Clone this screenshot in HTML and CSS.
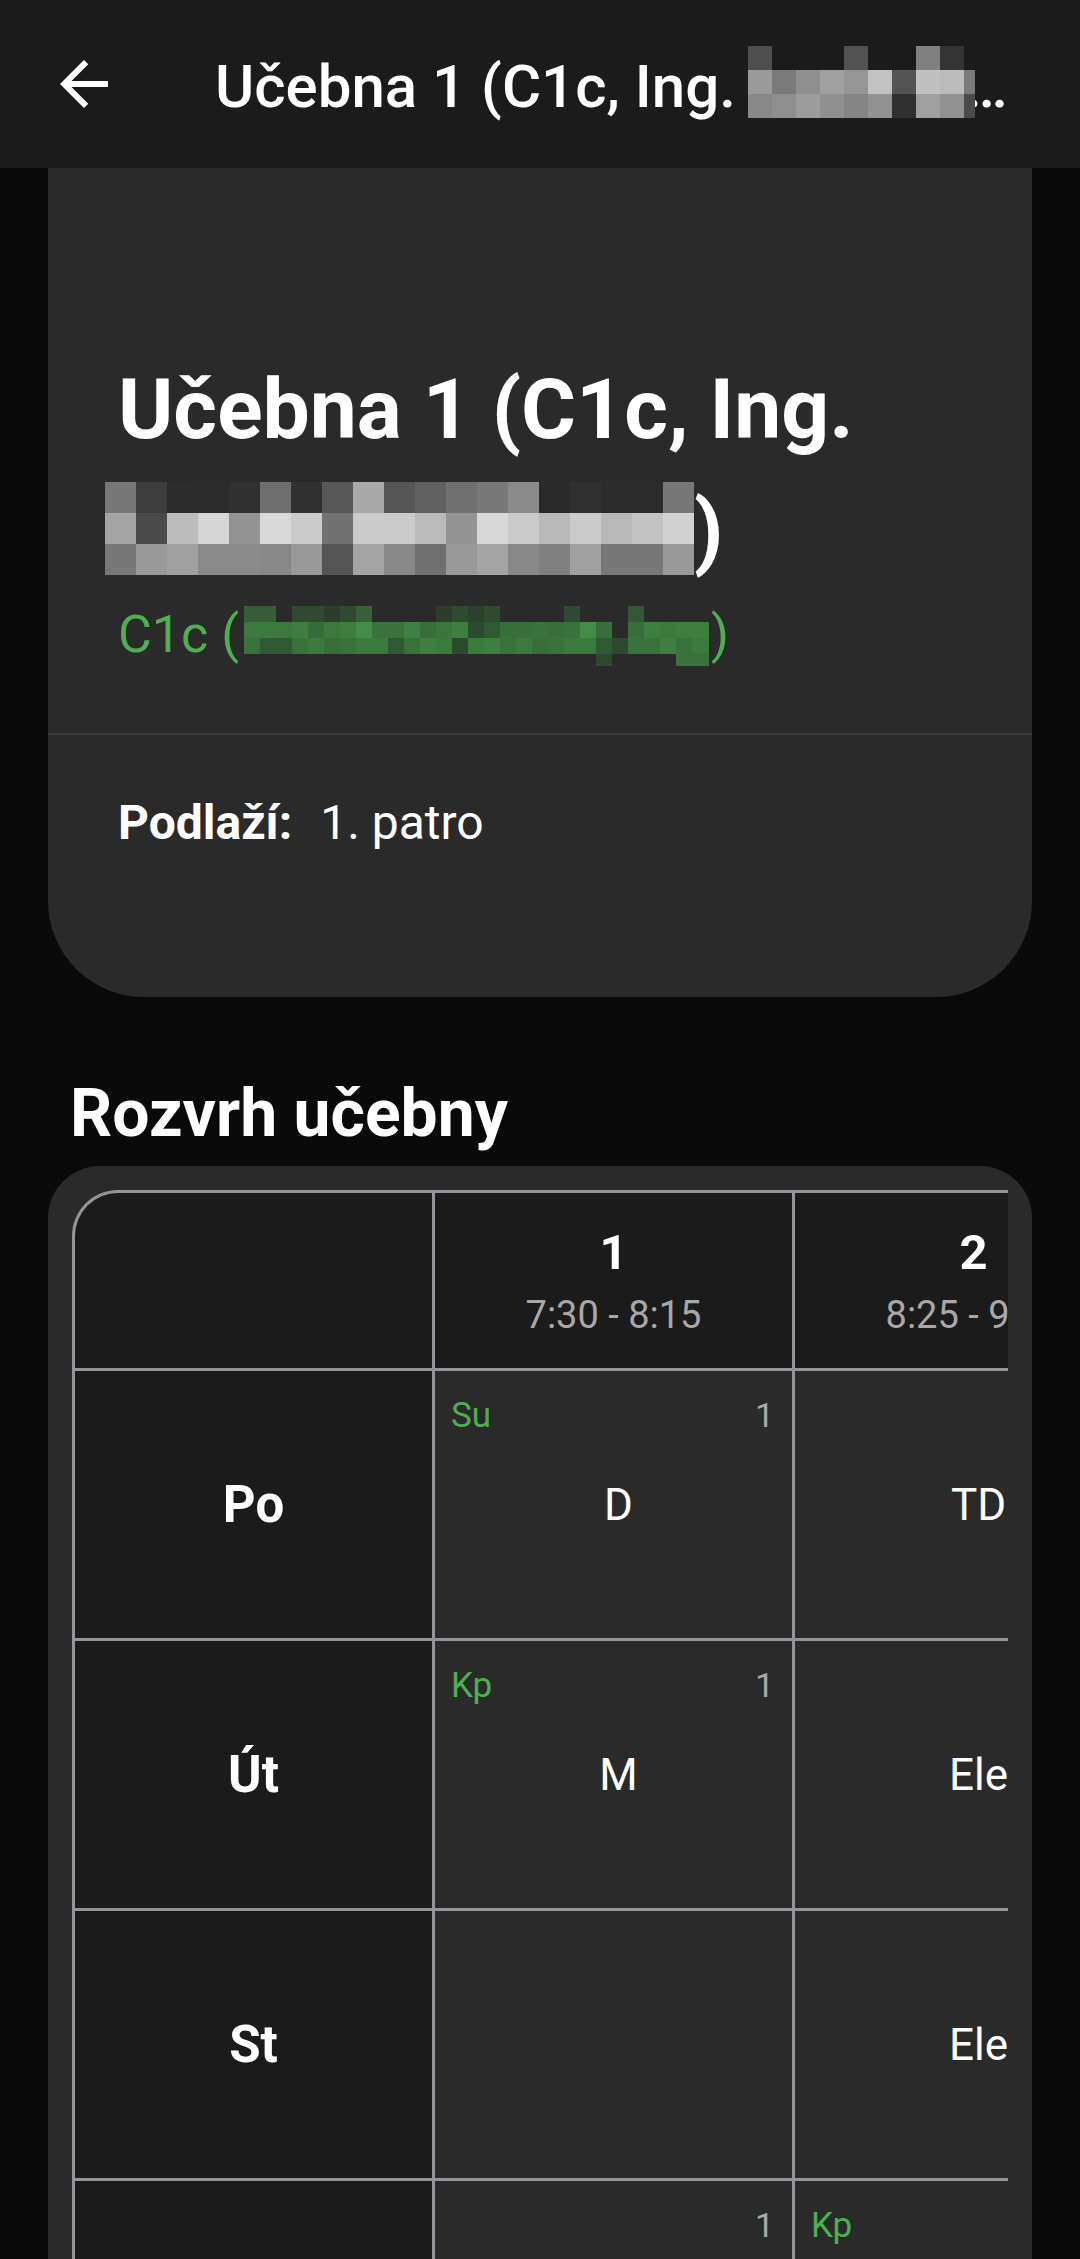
FILE: index.html
```html
<!DOCTYPE html>
<html lang="cs">
<head>
<meta charset="utf-8">
<title>Učebna 1</title>
<link rel="stylesheet" href="styles.css">
</head>
<body>
<header class="appbar">
  <svg class="back" viewBox="0 0 24 24" aria-label="Zpět"><path fill="#fff" d="M20 11H7.830l5.590-5.590L12 4l-8 8 8 8 1.410-1.410L7.830 13H20v-2z"/></svg>
  <h1 class="appbar-title">Učebna 1 (C1c, Ing.<svg class="mosaic-bar" width="227" height="72" viewBox="0 0 227 72" shape-rendering="crispEdges">
    <rect x="0" y="0" width="24" height="24" fill="#4f4f4f"/><rect x="96" y="0" width="24" height="24" fill="#525252"/><rect x="168" y="0" width="24" height="24" fill="#808080"/><rect x="192" y="0" width="24" height="24" fill="#333"/>
    <rect x="0" y="24" width="24" height="24" fill="#9a9a9a"/><rect x="24" y="24" width="24" height="24" fill="#7a7a7a"/><rect x="48" y="24" width="24" height="24" fill="#8f8f8f"/><rect x="72" y="24" width="24" height="24" fill="#a0a0a0"/><rect x="96" y="24" width="24" height="24" fill="#969696"/><rect x="120" y="24" width="24" height="24" fill="#c2c2c2"/><rect x="144" y="24" width="24" height="24" fill="#545454"/><rect x="168" y="24" width="24" height="24" fill="#c0c0c0"/><rect x="192" y="24" width="24" height="24" fill="#bcbcbc"/><rect x="216" y="24" width="11" height="24" fill="#7a7a7a"/>
    <rect x="0" y="48" width="24" height="24" fill="#888"/><rect x="24" y="48" width="24" height="24" fill="#8e8e8e"/><rect x="48" y="48" width="24" height="24" fill="#9c9c9c"/><rect x="72" y="48" width="24" height="24" fill="#909090"/><rect x="96" y="48" width="24" height="24" fill="#858585"/><rect x="120" y="48" width="24" height="24" fill="#929292"/><rect x="144" y="48" width="24" height="24" fill="#303030"/><rect x="168" y="48" width="24" height="24" fill="#a0a0a0"/><rect x="192" y="48" width="24" height="24" fill="#929292"/><rect x="216" y="48" width="11" height="24" fill="#4a4a4a"/>
  </svg><span class="ellipsis">…</span></h1>
</header>

<main class="content">
  <section class="room-card">
    <div class="room-head">
      <h2 class="room-title">Učebna 1 (C1c, Ing. <svg class="mosaic-name" width="589" height="93" viewBox="0 0 589 93" shape-rendering="crispEdges">
        <g>
          <rect x="0" y="0" width="31" height="31" fill="#777"/><rect x="31" y="0" width="31" height="31" fill="#3d3d3d"/><rect x="62" y="0" width="31" height="31" fill="#2c2c2c"/><rect x="93" y="0" width="31" height="31" fill="#2b2b2b"/><rect x="124" y="0" width="31" height="31" fill="#303030"/><rect x="155" y="0" width="31" height="31" fill="#6e6e6e"/><rect x="186" y="0" width="31" height="31" fill="#313131"/><rect x="217" y="0" width="31" height="31" fill="#585858"/><rect x="248" y="0" width="31" height="31" fill="#a9a9a9"/><rect x="279" y="0" width="31" height="31" fill="#565656"/><rect x="310" y="0" width="31" height="31" fill="#606060"/><rect x="341" y="0" width="31" height="31" fill="#707070"/><rect x="372" y="0" width="31" height="31" fill="#787878"/><rect x="403" y="0" width="31" height="31" fill="#8a8a8a"/><rect x="434" y="0" width="31" height="31" fill="#2a2a2a"/><rect x="465" y="0" width="31" height="31" fill="#2f2f2f"/><rect x="496" y="0" width="31" height="31" fill="#2b2b2b"/><rect x="527" y="0" width="31" height="31" fill="#2b2b2b"/><rect x="558" y="0" width="31" height="31" fill="#777"/>
        </g>
        <g>
          <rect x="0" y="31" width="31" height="31" fill="#a5a5a5"/><rect x="31" y="31" width="31" height="31" fill="#4a4a4a"/><rect x="62" y="31" width="31" height="31" fill="#bcbcbc"/><rect x="93" y="31" width="31" height="31" fill="#d6d6d6"/><rect x="124" y="31" width="31" height="31" fill="#939393"/><rect x="155" y="31" width="31" height="31" fill="#d9d9d9"/><rect x="186" y="31" width="31" height="31" fill="#cbcbcb"/><rect x="217" y="31" width="31" height="31" fill="#727272"/><rect x="248" y="31" width="31" height="31" fill="#cbcbcb"/><rect x="279" y="31" width="31" height="31" fill="#cbcbcb"/><rect x="310" y="31" width="31" height="31" fill="#bbb"/><rect x="341" y="31" width="31" height="31" fill="#949494"/><rect x="372" y="31" width="31" height="31" fill="#d8d8d8"/><rect x="403" y="31" width="31" height="31" fill="#cbcbcb"/><rect x="434" y="31" width="31" height="31" fill="#b9b9b9"/><rect x="465" y="31" width="31" height="31" fill="#cbcbcb"/><rect x="496" y="31" width="31" height="31" fill="#b9b9b9"/><rect x="527" y="31" width="31" height="31" fill="#c3c3c3"/><rect x="558" y="31" width="31" height="31" fill="#d2d2d2"/>
        </g>
        <g>
          <rect x="0" y="62" width="31" height="31" fill="#777"/><rect x="31" y="62" width="31" height="31" fill="#999"/><rect x="62" y="62" width="31" height="31" fill="#a0a0a0"/><rect x="93" y="62" width="31" height="31" fill="#8a8a8a"/><rect x="124" y="62" width="31" height="31" fill="#8a8a8a"/><rect x="155" y="62" width="31" height="31" fill="#888"/><rect x="186" y="62" width="31" height="31" fill="#999"/><rect x="217" y="62" width="31" height="31" fill="#555"/><rect x="248" y="62" width="31" height="31" fill="#a3a3a3"/><rect x="279" y="62" width="31" height="31" fill="#888"/><rect x="310" y="62" width="31" height="31" fill="#707070"/><rect x="341" y="62" width="31" height="31" fill="#999"/><rect x="372" y="62" width="31" height="31" fill="#a3a3a3"/><rect x="403" y="62" width="31" height="31" fill="#888"/><rect x="434" y="62" width="31" height="31" fill="#808080"/><rect x="465" y="62" width="31" height="31" fill="#a0a0a0"/><rect x="496" y="62" width="31" height="31" fill="#777"/><rect x="527" y="62" width="31" height="31" fill="#777"/><rect x="558" y="62" width="31" height="31" fill="#999"/>
        </g>
      </svg>)</h2>
      <p class="room-sub">C1c (<svg class="mosaic-green" width="465" height="60" viewBox="0 0 465 60" shape-rendering="crispEdges">
        <g>
          <rect x="0" y="0" width="16" height="16" fill="#355e37"/><rect x="16" y="0" width="16" height="16" fill="#355e37"/><rect x="48" y="0" width="16" height="16" fill="#2f4a30"/><rect x="64" y="0" width="16" height="16" fill="#2f4a30"/><rect x="80" y="0" width="16" height="16" fill="#2c3d2d"/><rect x="96" y="0" width="16" height="16" fill="#2f4a30"/><rect x="112" y="0" width="16" height="16" fill="#38603a"/><rect x="192" y="0" width="16" height="16" fill="#2c3d2d"/><rect x="208" y="0" width="16" height="16" fill="#2f4a30"/><rect x="224" y="0" width="16" height="16" fill="#2c402e"/><rect x="240" y="0" width="16" height="16" fill="#2f4a30"/><rect x="320" y="0" width="16" height="16" fill="#2f4a30"/><rect x="384" y="0" width="16" height="16" fill="#345636"/>
        </g>
        <g>
          <rect x="0" y="16" width="16" height="16" fill="#3a7a3d"/><rect x="16" y="16" width="16" height="16" fill="#3a7a3d"/><rect x="32" y="16" width="16" height="16" fill="#3c783e"/><rect x="48" y="16" width="16" height="16" fill="#3e7f40"/><rect x="64" y="16" width="16" height="16" fill="#356d38"/><rect x="80" y="16" width="16" height="16" fill="#3c783e"/><rect x="96" y="16" width="16" height="16" fill="#3e7f40"/><rect x="112" y="16" width="16" height="16" fill="#448c47"/><rect x="128" y="16" width="16" height="16" fill="#3a723c"/><rect x="144" y="16" width="16" height="16" fill="#3a723c"/><rect x="160" y="16" width="16" height="16" fill="#418044"/><rect x="176" y="16" width="16" height="16" fill="#376e39"/><rect x="192" y="16" width="16" height="16" fill="#3b763d"/><rect x="208" y="16" width="16" height="16" fill="#3e7f40"/><rect x="224" y="16" width="16" height="16" fill="#2c4a2e"/><rect x="240" y="16" width="16" height="16" fill="#2f5a31"/><rect x="256" y="16" width="16" height="16" fill="#376e39"/><rect x="272" y="16" width="16" height="16" fill="#376e39"/><rect x="288" y="16" width="16" height="16" fill="#3a723c"/><rect x="304" y="16" width="16" height="16" fill="#376e39"/><rect x="320" y="16" width="16" height="16" fill="#3a723c"/><rect x="336" y="16" width="16" height="16" fill="#448c47"/><rect x="352" y="16" width="16" height="16" fill="#376e39"/><rect x="384" y="16" width="16" height="16" fill="#376e39"/><rect x="400" y="16" width="16" height="16" fill="#3e7f40"/><rect x="416" y="16" width="16" height="16" fill="#3a7a3d"/><rect x="432" y="16" width="16" height="16" fill="#3e7f40"/><rect x="448" y="16" width="17" height="16" fill="#3e7f40"/>
        </g>
        <g>
          <rect x="0" y="32" width="16" height="16" fill="#3a723c"/><rect x="16" y="32" width="16" height="16" fill="#2f5a31"/><rect x="32" y="32" width="16" height="16" fill="#2f5a31"/><rect x="48" y="32" width="16" height="16" fill="#3a723c"/><rect x="64" y="32" width="16" height="16" fill="#3a7a3d"/><rect x="80" y="32" width="16" height="16" fill="#376e39"/><rect x="96" y="32" width="16" height="16" fill="#3a723c"/><rect x="112" y="32" width="16" height="16" fill="#3a7a3d"/><rect x="128" y="32" width="16" height="16" fill="#3a7a3d"/><rect x="144" y="32" width="16" height="16" fill="#2f5a31"/><rect x="160" y="32" width="16" height="16" fill="#3a723c"/><rect x="176" y="32" width="16" height="16" fill="#3e7f40"/><rect x="192" y="32" width="16" height="16" fill="#3a7a3d"/><rect x="208" y="32" width="16" height="16" fill="#2c4a2e"/><rect x="224" y="32" width="16" height="16" fill="#3a7a3d"/><rect x="240" y="32" width="16" height="16" fill="#3e7f40"/><rect x="256" y="32" width="16" height="16" fill="#3a723c"/><rect x="272" y="32" width="16" height="16" fill="#3a7a3d"/><rect x="288" y="32" width="16" height="16" fill="#376e39"/><rect x="304" y="32" width="16" height="16" fill="#3a723c"/><rect x="320" y="32" width="16" height="16" fill="#3a7a3d"/><rect x="336" y="32" width="16" height="16" fill="#3a7a3d"/><rect x="352" y="32" width="16" height="16" fill="#2f5a31"/><rect x="368" y="32" width="16" height="16" fill="#2c4a2e"/><rect x="384" y="32" width="16" height="16" fill="#3a723c"/><rect x="400" y="32" width="16" height="16" fill="#3a723c"/><rect x="416" y="32" width="16" height="16" fill="#3e7f40"/><rect x="432" y="32" width="16" height="16" fill="#3a723c"/><rect x="448" y="32" width="17" height="16" fill="#3a7a3d"/>
        </g>
        <g>
          <rect x="352" y="48" width="16" height="12" fill="#2c4a2e"/><rect x="432" y="48" width="16" height="12" fill="#3a723c"/><rect x="448" y="48" width="17" height="12" fill="#3a723c"/>
        </g>
      </svg>)</p>
    </div>
    <div class="room-info"><span class="info-label">Podlaží:</span><span class="info-value">1. patro</span></div>
  </section>

  <h2 class="section-title">Rozvrh učebny</h2>

  <section class="tt-card">
    <div class="tt-viewport">
      <div class="tt-grid">
        <div class="th th-corner"></div>
        <div class="th"><span class="th-num">1</span><span class="th-time">7:30 - 8:15</span></div>
        <div class="th"><span class="th-num">2</span><span class="th-time">8:25 - 9:10</span></div>
        <div class="th"><span class="th-num">3</span><span class="th-time">9:20 - 10:05</span></div>

        <div class="day">Po</div>
        <div class="cell"><div class="cell-top"><span class="abbr">Su</span><span class="grp">1</span></div><div class="subj">D</div></div>
        <div class="cell"><div class="cell-top"></div><div class="subj">TD</div></div>
        <div class="cell"></div>

        <div class="day">Út</div>
        <div class="cell"><div class="cell-top"><span class="abbr">Kp</span><span class="grp">1</span></div><div class="subj">M</div></div>
        <div class="cell"><div class="cell-top"></div><div class="subj">Ele</div></div>
        <div class="cell"></div>

        <div class="day">St</div>
        <div class="cell"></div>
        <div class="cell"><div class="cell-top"></div><div class="subj">Ele</div></div>
        <div class="cell"></div>

        <div class="day">Čt</div>
        <div class="cell"><div class="cell-top"><span class="grp">1</span></div><div class="subj">M</div></div>
        <div class="cell"><div class="cell-top"><span class="abbr">Kp</span></div><div class="subj">M</div></div>
        <div class="cell"></div>
      </div>
    </div>
  </section>
</main>
</body>
</html>
```

FILE: styles.css
```css
html, body {
  margin: 0;
  padding: 0;
}

body {
  background: #0a0a0a;
  color: #ffffff;
  font-family: Roboto, "Noto Sans", "Liberation Sans", sans-serif;
  height: 2259px;
  overflow: hidden;
}

/* ---------- App bar ---------- */
.appbar {
  position: relative;
  z-index: 2;
  height: 168px;
  box-sizing: border-box;
  padding-left: 48px;
  display: flex;
  align-items: center;
  background: #1b1b1b;
}

.back {
  width: 72px;
  height: 72px;
  flex: none;
}

.appbar-title {
  margin: 0 0 0 95px;
  font-size: 60px;
  font-weight: 500;
  line-height: 70px;
  white-space: nowrap;
}

.mosaic-bar {
  position: relative;
  z-index: 1;
  margin-left: 12px;
  vertical-align: -11px;
}

.ellipsis {
  margin-left: -10px;
}

/* ---------- Room card ---------- */
.room-card {
  margin: 0 48px;
  background: #2a2a2a;
  border-radius: 0 0 96px 96px;
}

.room-head {
  padding: 181px 40px 67px 70px;
  border-bottom: 2px solid #383838;
}

.room-title {
  margin: 0;
  font-size: 84px;
  font-weight: 700;
  line-height: 121px;
}

.mosaic-name {
  margin-left: -13px;
  vertical-align: -16px;
}

.room-sub {
  margin: 13px 0 0;
  font-size: 52px;
  line-height: 61px;
  color: #4caf50;
}

.mosaic-green {
  margin-left: 5px;
  margin-right: 2px;
  vertical-align: -14px;
}

.room-info {
  display: flex;
  gap: 28px;
  padding: 60px 40px 146px 70px;
  font-size: 48px;
  line-height: 56px;
}

.info-label {
  font-weight: 700;
}

/* ---------- Section title ---------- */
.section-title {
  margin: 79px 0 15px;
  padding-left: 70px;
  font-size: 66px;
  font-weight: 700;
  line-height: 75px;
}

/* ---------- Timetable ---------- */
.tt-card {
  margin: 0 48px;
  padding: 24px 24px 0;
  background: #2a2a2a;
  border-radius: 52px 52px 0 0;
}

.tt-viewport {
  overflow: hidden;
}

.tt-grid {
  display: grid;
  grid-template-columns: repeat(4, 357px);
  grid-template-rows: 175px repeat(4, 267px);
  gap: 3px;
  width: max-content;
  background: #96949b;
  border-top: 3px solid #96949b;
  border-left: 3px solid #96949b;
  border-radius: 46px 0 0 0;
  overflow: hidden;
}

.th {
  background: #1b1b1b;
  display: flex;
  flex-direction: column;
  align-items: center;
  justify-content: center;
}

.th-num {
  font-size: 49px;
  font-weight: 700;
  line-height: 56px;
}

.th-time {
  margin-top: 12px;
  font-size: 38px;
  line-height: 44px;
  color: #a8a8a8;
}

.day {
  background: #1b1b1b;
  display: flex;
  align-items: center;
  justify-content: center;
  font-size: 51px;
  font-weight: 700;
}

.cell {
  background: #2a2a2a;
  display: grid;
  grid-template-rows: 65px 1fr 65px;
}

.cell-top {
  display: flex;
  align-items: flex-start;
  padding: 24px 18px 0 16px;
  line-height: 41px;
}

.abbr {
  font-size: 35px;
  color: #4caf50;
}

.grp {
  margin-left: auto;
  font-size: 34px;
  color: #a8a8a8;
}

.subj {
  grid-row: 2;
  display: flex;
  align-items: center;
  justify-content: center;
  padding-left: 10px;
  font-size: 44px;
}
```
